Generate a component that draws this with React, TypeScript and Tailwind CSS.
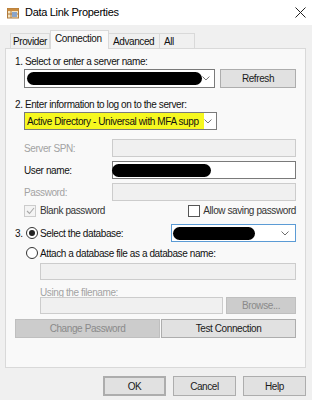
const font = { fontFamily: '"Liberation Sans", Arial, sans-serif', letterSpacing: "-0.4px" };

function Chevron({ className = "" }: { className?: string }) {
  return (
    <svg width="8" height="5" viewBox="0 0 8 5" className={className}>
      <path d="M0.5 0.5 L4 4 L7.5 0.5" fill="none" stroke="#6e6e6e" strokeWidth="1" />
    </svg>
  );
}

function Blob({ className }: { className: string }) {
  return <div className={"rounded-full bg-black " + className} />;
}

function Btn({
  children,
  className = "",
  disabled = false,
}: {
  children: React.ReactNode;
  className?: string;
  disabled?: boolean;
}) {
  return (
    <div
      className={
        "flex items-center justify-center border " +
        (disabled
          ? "bg-[#cccccc] border-[#bfbfbf] text-[#8a8a8a] "
          : "bg-[#e1e1e1] border-[#adadad] text-[#1a1a1a] ") +
        className
      }
    >
      {children}
    </div>
  );
}

function Radio({ checked }: { checked?: boolean }) {
  return (
    <div className="w-[12px] h-[12px] rounded-full border border-[#333] bg-white flex items-center justify-center shrink-0">
      {checked && <div className="w-[6px] h-[6px] rounded-full bg-[#222]" />}
    </div>
  );
}

export default function App() {
  return (
    <div className="w-[312px] h-[400px] bg-[#f0f0f0] text-[10px] text-[#111] overflow-hidden" style={font}>
      {/* title bar */}
      <div className="h-[25px] bg-white flex items-center pl-[7px] pr-[6px]">
        <svg width="12" height="12" viewBox="0 0 12 12">
          <rect x="0.5" y="1.5" width="11" height="9.5" fill="#f4e3c0" stroke="#b07a3c" />
          <rect x="0.5" y="1.5" width="11" height="2.5" fill="#c98b3f" />
          <line x1="4" y1="4" x2="4" y2="11" stroke="#b07a3c" />
          <line x1="0.5" y1="7" x2="11.5" y2="7" stroke="#b07a3c" />
          <rect x="5" y="5" width="5" height="5" fill="#8aa4c8" />
        </svg>
        <span className="ml-[6px] text-[11px] text-black tracking-[-0.3px]">Data Link Properties</span>
        <svg width="11" height="11" viewBox="0 0 11 11" className="ml-auto">
          <path d="M0.5 0.5 L10.5 10.5 M10.5 0.5 L0.5 10.5" stroke="#222" strokeWidth="1" />
        </svg>
      </div>

      {/* tabs */}
      <div className="flex items-end h-[23px] pl-[10px] whitespace-nowrap">
        <div className="h-[15px] px-[1px] flex items-center justify-center border border-b-0 border-[#d9d9d9] bg-[#f0f0f0] w-[40px]">Provider</div>
        <div className="h-[19px] relative z-10 -mb-px pb-[3px] px-[4px] flex items-center border border-b-0 border-[#d9d9d9] bg-[#f9f9f9] w-[59px]">Connection</div>
        <div className="h-[15px] px-[4px] flex items-center border border-l-0 border-b-0 border-[#d9d9d9] w-[51px]">Advanced</div>
        <div className="h-[15px] px-[4px] flex items-center border border-l-0 border-b-0 border-[#d9d9d9] w-[35px]">All</div>
      </div>

      {/* panel */}
      <div className="ml-[5px] w-[301px] h-[320px] border border-[#d9d9d9] bg-[#f9f9f9] pl-[9px] pr-[9px] flex flex-col">
        <div className="mt-[5px] h-[14px] flex items-center">1. Select or enter a server name:</div>

        <div className="mt-[1px] h-[19px] flex">
          <div className="ml-[9px] w-[191px] border border-[#7a7a7a] bg-white flex items-center pl-[2px] pr-[4px]">
            <Blob className="h-[13px] w-[178px]" />
            <Chevron className="ml-auto" />
          </div>
          <Btn className="ml-[5px] w-[77px]">Refresh</Btn>
        </div>

        <div className="mt-[9px] h-[14px] flex items-center">2. Enter information to log on to the server:</div>

        <div className="mt-[1px] h-[18px] ml-[9px] w-[193px] border border-[#7a7a7a] bg-white flex items-center pr-[4px]">
          <div className="h-full w-[181px] bg-[#f6f81f] flex items-center pl-[2px] overflow-hidden whitespace-nowrap">
            Active Directory - Universal with MFA supp
          </div>
          <Chevron className="ml-auto" />
        </div>

        <div className="mt-[9px] h-[18px] flex items-center">
          <span className="ml-[9px] text-[#a3a3a3]">Server SPN:</span>
          <div className="ml-auto w-[184px] h-full border border-[#cccccc] bg-[#f0f0f0]" />
        </div>
        <div className="mt-[4px] h-[18px] flex items-center">
          <span className="ml-[9px]">User name:</span>
          <div className="ml-auto w-[184px] h-full border border-[#7a7a7a] bg-white flex items-center">
            <Blob className="h-[13px] w-[99px] -ml-px" />
          </div>
        </div>
        <div className="mt-[4px] h-[18px] flex items-center">
          <span className="ml-[9px] text-[#a3a3a3]">Password:</span>
          <div className="ml-auto w-[184px] h-full border border-[#cccccc] bg-[#f0f0f0]" />
        </div>

        <div className="mt-[3px] h-[13px] flex items-center">
          <div className="ml-[9px] w-[12px] h-[12px] border border-[#cccccc] bg-[#f4f4f4] flex items-center justify-center">
            <svg width="9" height="8" viewBox="0 0 9 8">
              <path d="M1 4 L3.5 6.5 L8 1" fill="none" stroke="#a8a8a8" strokeWidth="1.1" />
            </svg>
          </div>
          <span className="ml-[4px] text-[#333]">Blank password</span>
          <div className="ml-auto w-[12px] h-[12px] border border-[#555] bg-white" />
          <span className="ml-[3px] text-[#333]">Allow saving password</span>
        </div>

        <div className="mt-[7px] h-[18px] flex items-center">
          <span className="w-[11px]">3.</span>
          <Radio checked />
          <span className="ml-[2px]">Select the database:</span>
          <div className="ml-auto w-[125px] h-full border border-[#5b9bd5] bg-white flex items-center pr-[6px]">
            <Blob className="h-[13px] w-[82px] ml-px" />
            <Chevron className="ml-auto" />
          </div>
        </div>

        <div className="mt-[4px] h-[14px] flex items-center pl-[11px]">
          <Radio />
          <span className="ml-[2px]">Attach a database file as a database name:</span>
        </div>

        <div className="mt-[3px] ml-[25px] h-[17px] border border-[#cccccc] bg-[#f0f0f0]" />

        <div className="mt-[5px] ml-[25px] h-[14px] flex items-center text-[#a3a3a3]">Using the filename:</div>

        <div className="mt-[-2px] ml-[25px] h-[17px] flex">
          <div className="w-[183px] border border-[#cccccc] bg-[#f0f0f0]" />
          <Btn disabled className="ml-auto w-[70px]">Browse...</Btn>
        </div>

        <div className="mt-[5px] h-[19px] flex">
          <Btn disabled className="w-[145px]">Change Password</Btn>
          <Btn className="ml-auto w-[135px]">Test Connection</Btn>
        </div>
      </div>

      {/* dialog buttons */}
      <div className="mt-[8px] h-[20px] flex justify-end pr-[6px] gap-[7px]">
        <Btn className="w-[63px] border-[#0078d7] border-2">OK</Btn>
        <Btn className="w-[63px]">Cancel</Btn>
        <Btn className="w-[63px]">Help</Btn>
      </div>
    </div>
  );
}
